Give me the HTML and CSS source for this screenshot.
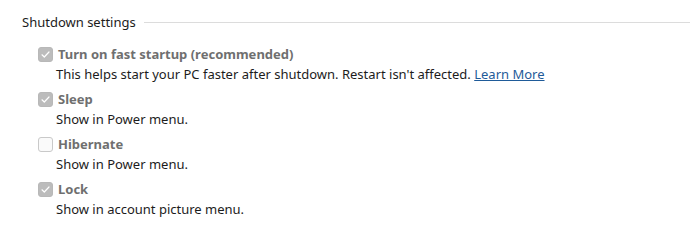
FILE: index.html
```html
<!DOCTYPE html>
<html>
<head>
<meta charset="utf-8">
<link rel="stylesheet" href="styles.css">
</head>
<body>
<div class="page">
  <div class="header">
    <span class="header-title">Shutdown settings</span>
    <span class="header-line"></span>
  </div>
  <div class="options">
    <div class="option">
      <div class="option-row">
        <span class="box checked"><svg viewBox="0 0 15 15" width="15" height="15"><path d="M4 7.8 L6.3 10 L11 5" fill="none" stroke="#fff" stroke-width="1.2" stroke-linecap="round" stroke-linejoin="round"/></svg></span>
        <span class="option-title">Turn on fast startup (recommended)</span>
      </div>
      <div class="option-desc">This helps start your PC faster after shutdown. Restart isn't affected. <a class="link" href="#">Learn More</a></div>
    </div>
    <div class="option">
      <div class="option-row">
        <span class="box checked"><svg viewBox="0 0 15 15" width="15" height="15"><path d="M4 7.8 L6.3 10 L11 5" fill="none" stroke="#fff" stroke-width="1.2" stroke-linecap="round" stroke-linejoin="round"/></svg></span>
        <span class="option-title">Sleep</span>
      </div>
      <div class="option-desc">Show in Power menu.</div>
    </div>
    <div class="option">
      <div class="option-row">
        <span class="box"></span>
        <span class="option-title">Hibernate</span>
      </div>
      <div class="option-desc">Show in Power menu.</div>
    </div>
    <div class="option">
      <div class="option-row">
        <span class="box checked"><svg viewBox="0 0 15 15" width="15" height="15"><path d="M4 7.8 L6.3 10 L11 5" fill="none" stroke="#fff" stroke-width="1.2" stroke-linecap="round" stroke-linejoin="round"/></svg></span>
        <span class="option-title">Lock</span>
      </div>
      <div class="option-desc">Show in account picture menu.</div>
    </div>
  </div>
</div>
</body>
</html>
```
FILE: styles.css
```css
html, body {
  margin: 0;
  padding: 0;
  background: #ffffff;
}
body {
  font-family: "Noto Sans", "Open Sans", sans-serif;
  font-size: 13px;
  color: #1c1c1c;
  width: 700px;
  height: 232px;
  overflow: hidden;
}
.page {
  padding: 12px 10px 0 22px;
}
.header {
  display: flex;
  align-items: center;
  gap: 8px;
  height: 20px;
}
.header-title {
  font-size: 13px;
  color: #1c1c1c;
  white-space: nowrap;
}
.header-line {
  flex: 1;
  height: 1px;
  background: #dcdcdc;
  margin-top: 1px;
}
.options {
  padding-left: 16px;
  margin-top: 12px;
  display: flex;
  flex-direction: column;
  gap: 5px;
}
.option {
  display: flex;
  flex-direction: column;
}
.option-row {
  display: flex;
  align-items: center;
  gap: 5px;
  height: 20px;
}
.box {
  width: 15px;
  height: 15px;
  box-sizing: border-box;
  border-radius: 3px;
  border: 1px solid #c9c9c9;
  background: #fafafa;
  display: flex;
}
.box.checked {
  border-color: #b8b8b8;
  background: #bcbcbc;
}
.box svg {
  margin: -1px;
}
.option-title {
  font-weight: 700;
  color: #6f6f6f;
}
.option-desc {
  padding-left: 18px;
  height: 20px;
  line-height: 20px;
}
.link {
  color: #1f5b99;
  text-decoration: underline;
}
```
